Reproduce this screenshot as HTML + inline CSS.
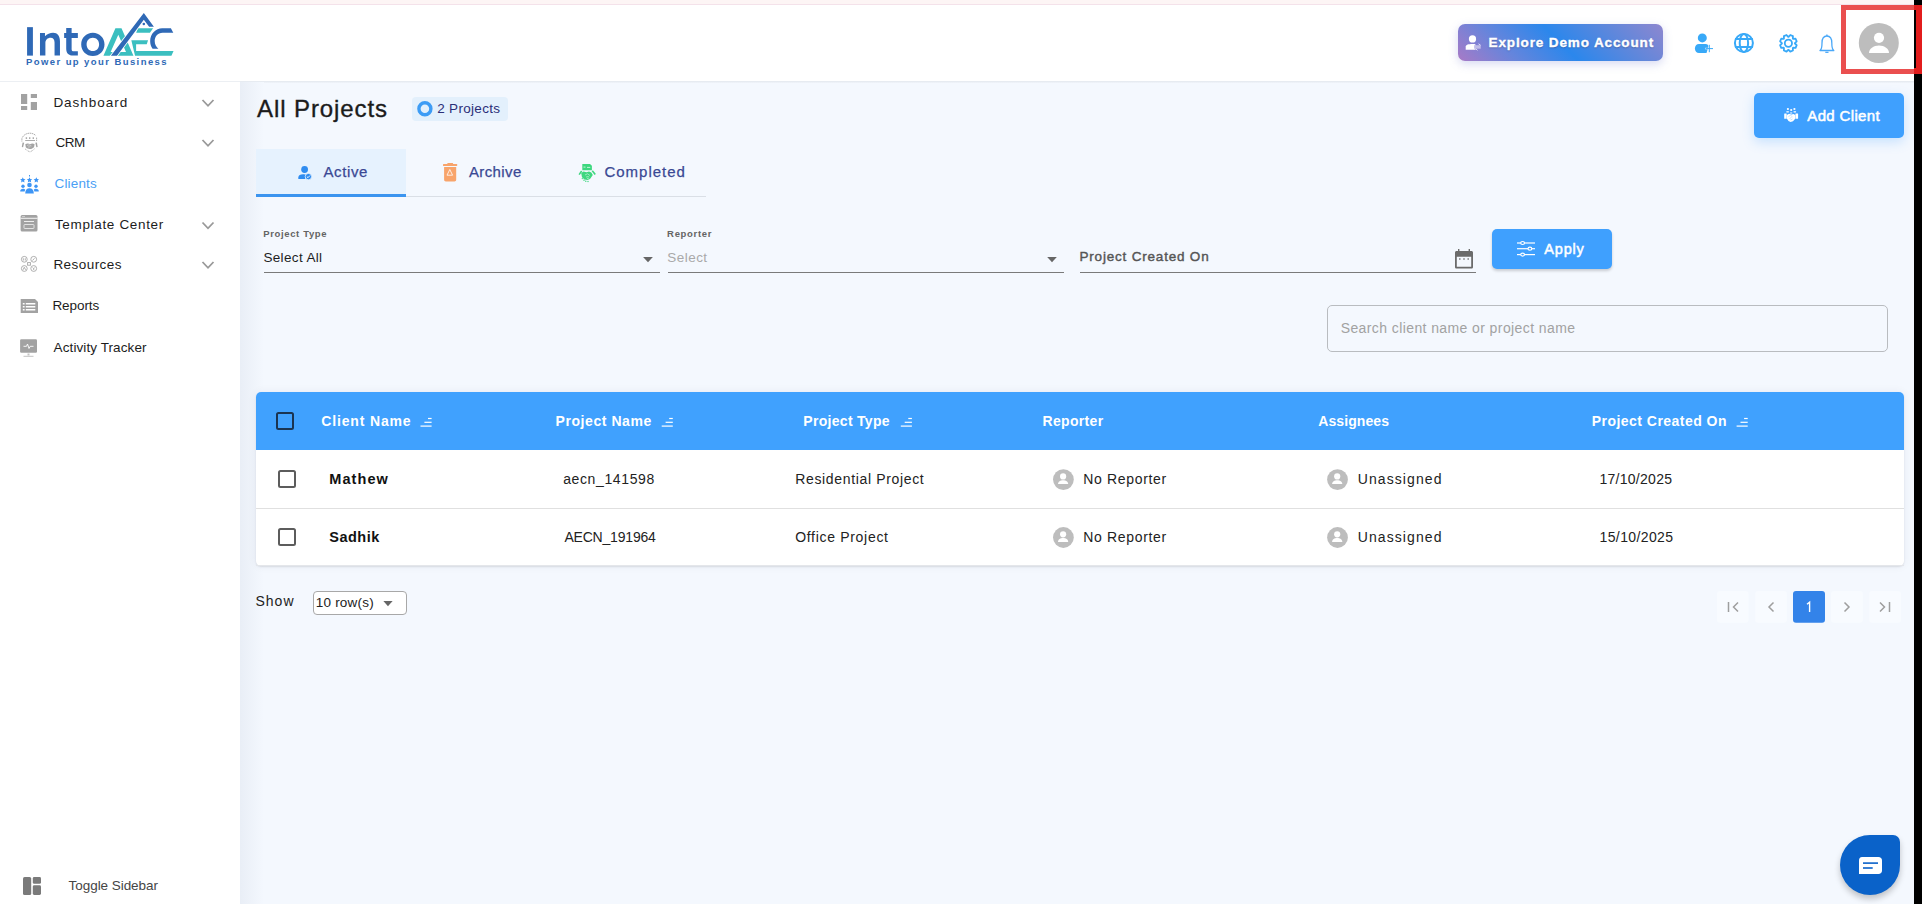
<!DOCTYPE html>
<html><head><meta charset="utf-8">
<style>
*{box-sizing:border-box;margin:0;padding:0}
html,body{width:1922px;height:904px;overflow:hidden;background:#f4f8fe;font-family:"Liberation Sans",sans-serif;color:#1e1e1e;position:relative}
.a{position:absolute}
.t{position:absolute;white-space:nowrap;line-height:normal}
svg{position:absolute;overflow:visible}
</style></head><body>
<!-- top strip -->
<div class="a" style="left:0;top:0;width:1914px;height:4px;background:#fdf5f5"></div>
<div class="a" style="left:0;top:4px;width:1914px;height:1px;background:#f4e2ea"></div>
<!-- header -->
<div class="a" style="left:0;top:5px;width:1914px;height:76px;background:#fff"></div>
<div class="a" style="left:0;top:81px;width:1914px;height:1px;background:#eceff3"></div>
<!-- sidebar -->
<div class="a" style="left:0;top:82px;width:240px;height:822px;background:#fff"></div>
<!-- content shade -->
<div class="a" style="left:240px;top:81px;width:1674px;height:2px;background:linear-gradient(180deg,#e3e8ee,#f1f5fb)"></div>
<div class="a" style="left:240px;top:82px;width:24px;height:822px;background:linear-gradient(90deg,#e9eef6,#f4f8fe)"></div>

<!-- LOGO -->
<svg style="left:20px;top:8px" width="160" height="64" viewBox="0 0 1600 640">
 <g transform="scale(0.8326)" fill="#2f69b6">
  <rect x="85" y="230" width="70" height="342"/>
  <path d="M240,572 V300 H300 V340 C325,312 360,298 398,298 C450,298 480,335 480,400 V572 H415 V415 C415,378 398,358 368,358 C330,358 305,385 305,420 V572 Z"/>
  <path d="M555,240 H620 V300 H695 V360 H620 V495 C620,515 630,520 650,520 H695 V572 H640 C585,572 555,545 555,490 V360 H530 V300 H555 Z"/>
  <path fill-rule="evenodd" d="M875,298 C955,298 1015,360 1015,437 C1015,515 955,576 875,576 C795,576 735,515 735,437 C735,360 795,298 875,298 Z M875,358 C830,358 800,392 800,437 C800,482 830,516 875,516 C920,516 950,482 950,437 C950,392 920,358 875,358 Z"/>
 </g>
 <g transform="translate(800,20) scale(0.531)">
  <path fill="#3bbfc0" fill-rule="evenodd" d="M65,860 L290,345 L405,345 L630,860 Z M345,465 L200,790 L490,790 Z"/>
  <path fill="#3bbfc0" d="M715,345 L1000,345 L940,430 L680,430 Z"/>
  <path fill="#3bbfc0" d="M590,570 L905,570 L880,645 L680,645 L680,770 L1385,770 L1345,860 L660,860 Z"/>
  <path fill="#2f69b6" d="M1335,345 L1380,430 L1180,430 C1085,430 1030,505 1030,585 C1030,650 1060,700 1100,730 L990,730 C960,690 945,640 945,585 C945,450 1050,345 1170,345 Z"/>
  <path fill="none" stroke="#fff" stroke-width="30" stroke-linejoin="miter" d="M205,860 L825,55 L1015,315 L925,315 L825,185 L320,860 Z"/>
  <path fill="#2f69b6" d="M205,860 L825,55 L1015,315 L925,315 L825,185 L320,860 Z"/>
  <circle cx="825" cy="265" r="24" fill="#2f69b6"/>
 </g>
</svg>

<!-- SIDEBAR ICONS -->
<svg style="left:0;top:0" width="240" height="904">
 <g fill="#a2a2a2">
  <rect x="21" y="94" width="6.2" height="10"/><rect x="30.8" y="94" width="6.2" height="4"/>
  <rect x="21" y="106" width="6.2" height="4"/><rect x="30.8" y="102" width="6.2" height="8"/>
 </g>
 <g fill="none" stroke="#999" stroke-width="1.8">
  <polyline points="202.5,100 208,105.8 213.5,100"/>
  <polyline points="202.5,140 208,145.8 213.5,140"/>
  <polyline points="202.5,222.5 208,228.3 213.5,222.5"/>
  <polyline points="202.5,262 208,267.8 213.5,262"/>
 </g>
 <!-- CRM -->
 <g fill="none" stroke="#a4a4a4" stroke-width="0.9" stroke-dasharray="1.6 0.6">
  <path d="M22.3,137.5 C24,134.5 27,133.2 29.7,133.2 C32.5,133.2 34.5,134.2 35.8,135.6"/>
  <path d="M21.9,138.3 V141.5 M36.6,137.6 V141"/>
 </g>
 <g fill="#a4a4a4">
  <rect x="25.7" y="137.3" width="1.4" height="1.6"/><rect x="29" y="137.3" width="1.4" height="1.6"/><rect x="32.6" y="137.3" width="1.4" height="1.6"/>
  <rect x="25.2" y="140.1" width="9.8" height="0.9"/>
  <path d="M22.6,142.6 L24.2,142.8 L23.1,147.3 L21.8,147 Z"/>
  <path d="M36.9,142.6 L35.3,142.8 L36.4,147.3 L37.7,147 Z"/>
  <path d="M25.3,144.3 C27,143.2 29,143.6 30,144.2 C31.5,143.4 33.3,143.4 34.6,144.3 L34,147.2 C32.5,148.6 31,149 29.8,149 C28.5,149 26.8,148.5 25.8,147.3 Z"/>
 </g>
 <path d="M25.2,149 L27.5,150.7 L30,152 L32.5,150.5 L34.5,148.8" fill="none" stroke="#a4a4a4" stroke-width="0.9" stroke-dasharray="1 0.7"/>
 <path d="M27,145.5 L29,144.8 L31.5,146 M28,147 L30.5,146.8" fill="none" stroke="#e2e2e2" stroke-width="0.6"/>
 <!-- Clients -->
 <g fill="#3d95f5">
  <path d="M22.8,177.2 l0.8,1.8 1.9,0.2 -1.4,1.3 0.4,1.9 -1.7,-1 -1.7,1 0.4,-1.9 -1.4,-1.3 1.9,-0.2 Z"/>
  <path d="M29.5,177.2 l0.8,1.8 1.9,0.2 -1.4,1.3 0.4,1.9 -1.7,-1 -1.7,1 0.4,-1.9 -1.4,-1.3 1.9,-0.2 Z"/>
  <path d="M36.3,177.2 l0.8,1.8 1.9,0.2 -1.4,1.3 0.4,1.9 -1.7,-1 -1.7,1 0.4,-1.9 -1.4,-1.3 1.9,-0.2 Z"/>
  <circle cx="23" cy="186.2" r="1.7"/><circle cx="36" cy="186.2" r="1.7"/><circle cx="29.5" cy="185" r="2.3"/>
  <path d="M25.2,193.4 C25.2,190 27,188.2 29.5,188.2 C32,188.2 33.8,190 33.8,193.4 Z"/>
  <path d="M20.2,191.6 C20.2,189.8 21.3,188.8 23,188.8 C24,188.8 24.8,189.2 25.2,189.8 L24.6,191.6 Z"/>
  <path d="M38.8,191.6 C38.8,189.8 37.7,188.8 36,188.8 C35,188.8 34.2,189.2 33.8,189.8 L34.4,191.6 Z"/>
  <rect x="29" y="175" width="1" height="1.5"/>
 </g>
 <!-- Template -->
 <g>
  <rect x="20.6" y="215" width="16.9" height="16.6" rx="1.5" fill="#a2a2a2"/>
  <rect x="20.6" y="217.8" width="16.9" height="0.9" fill="#fff"/>
  <rect x="22" y="216" width="3" height="0.7" fill="#ddd"/>
  <rect x="24" y="221" width="10" height="1" fill="#eee"/>
  <rect x="24" y="224.5" width="10" height="4" rx="0.6" fill="none" stroke="#e9e9e9" stroke-width="0.9"/>
 </g>
 <!-- Resources -->
 <g fill="none" stroke="#a6a6a6" stroke-width="0.9">
  <circle cx="24.3" cy="259.3" r="2.9"/><circle cx="33.7" cy="259.3" r="2.9"/>
  <circle cx="24.3" cy="268.5" r="2.9"/><circle cx="33.7" cy="268.5" r="2.9"/>
  <rect x="27.6" y="262.6" width="2.8" height="2.6"/>
  <path d="M23.3,260.5 V258.3 M25.3,260.5 V258.3 M32.5,260.5 L34.5,258.3 M23,269.8 L24.3,267.3 L25.6,269.8 M32.7,267.5 L33.7,268.7 L34.7,267.5 M33.7,268.7 V270"/>
 </g>
 <!-- Reports -->
 <g>
  <path d="M20.7,299 H35 L38,302 V313 H20.7 Z" fill="#a2a2a2"/>
  <g fill="#fff"><rect x="22.8" y="303" width="1.8" height="1.5"/><rect x="25.8" y="303" width="9.5" height="1.5"/>
  <rect x="22.8" y="306" width="1.8" height="1.5"/><rect x="25.8" y="306" width="9.5" height="1.5"/>
  <rect x="22.8" y="309" width="1.8" height="1.5"/><rect x="25.8" y="309" width="9.5" height="1.5"/></g>
 </g>
 <!-- Activity -->
 <g>
  <rect x="20.1" y="339.2" width="16.9" height="13.6" rx="1.2" fill="#a2a2a2"/>
  <polyline points="23.5,346.3 26.5,346.3 27.5,344 29,348.5 30.2,346.3 33.5,346.3" fill="none" stroke="#fff" stroke-width="0.9"/>
  <rect x="27.5" y="353.5" width="2" height="2" fill="#c4c4c4"/>
  <rect x="23.5" y="355.8" width="10" height="1" fill="#c4c4c4"/>
 </g>
 <!-- Toggle -->
 <g fill="#7a7a7a">
  <rect x="23" y="877" width="8.2" height="18" rx="1.6"/>
  <rect x="32.8" y="877" width="8.2" height="6.8" rx="1.4"/>
  <rect x="32.8" y="885.3" width="8.2" height="9.7" rx="1.4"/>
 </g>
</svg>

<!-- HEADER RIGHT -->
<div class="a" style="left:1458px;top:24px;width:205px;height:37px;border-radius:7px;background:linear-gradient(45deg,#a87ac6 0%,#6585dc 25%,#2b87ec 50%,#5d87dc 75%,#8e87cf 100%);box-shadow:0 3px 10px rgba(110,120,210,0.28)"></div>
<svg style="left:1464px;top:34px" width="20" height="18" viewBox="0 0 20 18">
 <g fill="#fff"><circle cx="8.5" cy="4.9" r="3.6"/><path d="M1.7,15.8 V12.6 C1.7,10.9 4.5,10.1 8.5,10.1 C10,10.1 11,10.2 11.5,10.4 V15.8 Z"/></g>
 <rect x="10.1" y="11.2" width="6.6" height="3.5" fill="#c0bdea"/>
 <path d="M14.5,9.8 L16.6,11.2 M13.5,16.3 L11.6,14.8" stroke="#e8e6f8" stroke-width="0.9"/>
</svg>
<svg style="left:0;top:0" width="1922" height="100">
 <!-- add user -->
 <g fill="#38a9f8">
  <circle cx="1702.3" cy="37.9" r="4.5"/>
  <path d="M1699,44 H1705.5 C1707.5,44 1708.5,45 1708.5,46.5 L1706.5,53 H1699 C1696.5,53 1694.9,51 1694.9,48.5 C1694.9,46 1696.5,44 1699,44 Z"/>
  <rect x="1705.2" y="47.8" width="8" height="1.5" fill="#fff"/><rect x="1708.5" y="44.3" width="1.5" height="8" fill="#fff"/>
  <rect x="1705.6" y="48.1" width="7.4" height="1"/><rect x="1708.8" y="44.8" width="1" height="7.4"/>
 </g>
 <!-- globe -->
 <g fill="none" stroke="#38a9f8" stroke-width="2">
  <circle cx="1743.9" cy="43" r="9"/>
  <ellipse cx="1743.9" cy="43" rx="4.2" ry="9"/>
  <line x1="1735" y1="39" x2="1752.8" y2="39"/><line x1="1735" y1="47" x2="1752.8" y2="47"/>
 </g>
 <!-- gear -->
 <g fill="none" stroke="#38a9f8" stroke-width="1.8" stroke-linejoin="round">
  <path d="M1794.90,43.51 L1796.69,45.18 L1795.59,47.83 L1793.14,47.74 L1792.84,48.04 L1792.93,50.49 L1790.28,51.59 L1788.61,49.80 L1788.19,49.80 L1786.52,51.59 L1783.87,50.49 L1783.96,48.04 L1783.66,47.74 L1781.21,47.83 L1780.11,45.18 L1781.90,43.51 L1781.90,43.09 L1780.11,41.42 L1781.21,38.77 L1783.66,38.86 L1783.96,38.56 L1783.87,36.11 L1786.52,35.01 L1788.19,36.80 L1788.61,36.80 L1790.28,35.01 L1792.93,36.11 L1792.84,38.56 L1793.14,38.86 L1795.59,38.77 L1796.69,41.42 L1794.90,43.09 Z"/>
  <circle cx="1788.4" cy="43.3" r="3.6"/>
 </g>
 <!-- bell -->
 <g fill="none" stroke="#4aa8f8" stroke-width="1.3" stroke-linejoin="round">
  <path d="M1820,50.5 C1822,49 1822,46 1822,43 C1822,38 1824,36 1826.9,36 C1829.8,36 1831.8,38 1831.8,43 C1831.8,46 1831.8,49 1833.8,50.5 Z"/>
  <path d="M1826.9,34.5 V36"/>
  <path d="M1825.3,52.3 H1828.5"/>
 </g>
 <!-- avatar -->
 <circle cx="1878.8" cy="42.9" r="20" fill="#bdbdbd"/>
 <circle cx="1879" cy="37.8" r="5.1" fill="#fff"/>
 <path d="M1869,53.1 C1869,48.5 1873.5,45.4 1879,45.4 C1884.5,45.4 1889,48.5 1889,53.1 Z" fill="#fff"/>
</svg>

<!-- CONTENT -->
<!-- badge -->
<div class="a" style="left:412px;top:97px;width:96px;height:24px;border-radius:4px;background:#e3f0fc"></div>
<svg style="left:0;top:0" width="520" height="130"><circle cx="424.9" cy="108.8" r="6" fill="none" stroke="#3d9cf5" stroke-width="3.4"/></svg>
<!-- add client -->
<div class="a" style="left:1754px;top:93px;width:150px;height:45px;border-radius:5px;background:#3fa0fe;box-shadow:0 4px 12px rgba(63,160,254,0.25)"></div>
<!-- tabs -->
<div class="a" style="left:256px;top:149px;width:150px;height:48px;background:#e6f2fe"></div>
<div class="a" style="left:406px;top:195.5px;width:300px;height:1.5px;background:#dadfe6"></div>
<div class="a" style="left:256px;top:194px;width:150px;height:3px;background:#3b94ef"></div>
<svg style="left:0;top:0" width="720" height="200">
 <g fill="#2f8cf0">
  <circle cx="304.6" cy="169.5" r="3.4"/>
  <path d="M298.3,178.9 V177.5 C298.3,175.3 300.5,174.3 303,174.3 C304.5,174.3 305.5,174.5 306,174.8 L305.3,178.9 Z"/>
  <circle cx="308.4" cy="176.6" r="3.2" stroke="#e6f2fe" stroke-width="0.8"/>
  <polyline points="306.9,176.6 308,177.7 309.9,175.6" fill="none" stroke="#fff" stroke-width="0.9"/>
 </g>
 <g fill="#f8a46b">
  <rect x="447.3" y="162.9" width="5.8" height="1.6" rx="0.5"/>
  <rect x="443" y="164.1" width="14.2" height="2" rx="0.5"/>
  <path d="M444.1,167 H456.2 V179.8 C456.2,180.8 455.4,181.4 454.5,181.4 H445.8 C444.9,181.4 444.1,180.8 444.1,179.8 Z"/>
  <polygon points="449.8,169.5 447,175.2 452.6,175.2" fill="none" stroke="#fff" stroke-width="0.8"/>
 </g>
 <g fill="#3dd77f">
  <path d="M582.3,164 H590 L591.9,165.8 V170.3 H582.3 Z"/>
  <rect x="583.5" y="166.6" width="2" height="1" fill="#c6f2d9"/><rect x="587" y="166.9" width="3.2" height="1" fill="#c6f2d9"/>
  <path d="M578.5,174.3 L581,170.6 L582.3,171.4 L579.8,175.1 Z"/>
  <path d="M595.9,174.1 L592.9,170.3 L591.7,171.2 L594.6,174.9 Z"/>
  <path d="M581.2,173 L583.5,171.5 L586.5,172.3 L589,171.6 L591.3,172.4 L592.8,175 L590,179 L587.5,180 L584.5,179.6 L582,177.3 Z"/>
  <circle cx="582.3" cy="178.6" r="0.7"/><circle cx="584" cy="180.2" r="0.7"/><circle cx="585.8" cy="181.3" r="0.7"/><circle cx="588" cy="181.5" r="0.7"/>
 </g>
 <path d="M585,175 L587.5,173.8 L590,175.5 M586,177 L588.8,176.5 M587,178.6 L589.3,178" fill="none" stroke="#d5f5e3" stroke-width="0.6"/>
</svg>
<!-- FILTERS -->
<div class="a" style="left:264px;top:272px;width:396px;height:1.2px;background:#7a7a7a"></div>
<div class="a" style="left:668px;top:272px;width:396px;height:1.2px;background:#7a7a7a"></div>
<div class="a" style="left:1080px;top:272px;width:396px;height:1.2px;background:#7a7a7a"></div>
<svg style="left:0;top:0" width="1500" height="280">
 <polygon points="643.1,257 652.9,257 648,262.2" fill="#666"/>
 <polygon points="1047.2,257 1056.8,257 1052,262.2" fill="#666"/>
 <g fill="#6b6b6b">
  <rect x="1458" y="249" width="1.4" height="3"/><rect x="1468.6" y="249" width="1.4" height="3"/>
  <path fill-rule="evenodd" d="M1456.5,251 H1471.5 C1472.3,251 1473,251.7 1473,252.5 V267 C1473,267.9 1472.3,268.6 1471.5,268.6 H1456.5 C1455.7,268.6 1455,267.9 1455,267 V252.5 C1455,251.7 1455.7,251 1456.5,251 Z M1456.8,256.8 V266.8 H1471.2 V256.8 Z"/>
  <rect x="1459.1" y="258.3" width="1.4" height="1.4"/><rect x="1463.3" y="258.3" width="1.4" height="1.4"/><rect x="1467.5" y="258.3" width="1.4" height="1.4"/>
 </g>
</svg>
<!-- apply -->
<div class="a" style="left:1492px;top:229px;width:120px;height:40px;border-radius:5px;background:#3fa0fe;box-shadow:0 2px 3px rgba(0,0,0,0.18)"></div>
<svg style="left:0;top:0" width="1700" height="280">
 <g stroke="#fff" stroke-width="1.2" fill="#3fa0fe">
  <line x1="1517" y1="243" x2="1535" y2="243"/><line x1="1517" y1="248.7" x2="1535" y2="248.7"/><line x1="1517" y1="254.6" x2="1535" y2="254.6"/>
  <ellipse cx="1522.6" cy="243" rx="1.9" ry="1.5"/><ellipse cx="1529.9" cy="248.7" rx="1.9" ry="1.5"/><ellipse cx="1522.6" cy="254.6" rx="1.9" ry="1.5"/>
 </g>
</svg>
<!-- search -->
<div class="a" style="left:1327px;top:305px;width:561px;height:47px;border:1px solid #b9bcc0;border-radius:5px"></div>

<!-- add client icon -->
<svg style="left:0;top:0" width="1922" height="200">
 <g fill="#fff">
  <circle cx="1787.9" cy="109" r="1.1"/><circle cx="1791.2" cy="110" r="1.1"/><circle cx="1794.4" cy="109" r="1.1"/>
  <rect x="1786.3" y="111.2" width="2.6" height="1.2" rx="0.4"/><rect x="1790" y="112.4" width="2.4" height="1.1" rx="0.4"/><rect x="1793.5" y="111.2" width="2.6" height="1.2" rx="0.4"/>
  <rect x="1784.2" y="113.6" width="2.5" height="5.1" rx="0.3"/><rect x="1795.4" y="113.6" width="2.7" height="5.1" rx="0.3"/>
  <path d="M1786.8,115 L1789,113.8 L1791.5,114.5 L1793.5,114 L1795.2,115 L1795.2,118.8 L1793,121.2 L1790.5,122.1 L1788.5,121 L1786.8,118.5 Z"/>
 </g>
 <path d="M1788.5,116.5 L1790.5,115.3 L1792.5,116.8 M1789.5,118.5 L1791.5,117.5 M1790.5,120 L1792.5,119" stroke="#9fd0ff" stroke-width="0.6" fill="none"/>
</svg>

<!-- TABLE -->
<div class="a" style="left:256px;top:392px;width:1648px;height:174px;background:#fff;border-radius:5px;box-shadow:0 1px 2px rgba(0,0,0,0.10),0 0 10px rgba(20,40,80,0.06)"></div>
<div class="a" style="left:256px;top:392px;width:1648px;height:58px;background:#40a1fe;border-radius:5px 5px 0 0"></div>
<div class="a" style="left:256px;top:508px;width:1648px;height:1px;background:#e0e0e0"></div>
<div class="a" style="left:256px;top:565px;width:1648px;height:1px;background:#e4e6ea"></div>
<div class="a" style="left:276.2px;top:412.3px;width:17.5px;height:17.5px;border:2px solid #1a3452;border-radius:2.5px"></div>
<div class="a" style="left:278.2px;top:470.3px;width:17.5px;height:17.3px;border:2px solid #5c5c5c;border-radius:2.5px"></div>
<div class="a" style="left:278.2px;top:528.3px;width:17.5px;height:17.3px;border:2px solid #5c5c5c;border-radius:2.5px"></div>
<svg style="left:0;top:0" width="1922" height="560">
 <g fill="#fff" id="sorts">
  <rect x="428.0" y="417.9" width="3.6" height="1.2"/><rect x="424.4" y="421.7" width="7.2" height="1.2"/><rect x="420.5" y="425.5" width="11.1" height="1.2"/>
  <rect x="669.2" y="417.9" width="3.6" height="1.2"/><rect x="665.6" y="421.7" width="7.2" height="1.2"/><rect x="661.7" y="425.5" width="11.1" height="1.2"/>
  <rect x="908.3" y="417.9" width="3.6" height="1.2"/><rect x="904.7" y="421.7" width="7.2" height="1.2"/><rect x="900.8" y="425.5" width="11.1" height="1.2"/>
  <rect x="1744.1" y="417.9" width="3.6" height="1.2"/><rect x="1740.5" y="421.7" width="7.2" height="1.2"/><rect x="1736.6" y="425.5" width="11.1" height="1.2"/>
 </g>
 <g id="avs">
  <g transform="translate(1063.4,479.6)"><circle r="10.4" fill="#bdbdbd"/><circle cx="-0.3" cy="-3.2" r="3.1" fill="#fff"/><path d="M-5.4,4.5 C-5.4,2 -3,0.6 -0.3,0.6 C2.4,0.6 4.8,2 4.8,4.5 Z" fill="#fff"/></g>
  <g transform="translate(1063.4,537.5)"><circle r="10.4" fill="#bdbdbd"/><circle cx="-0.3" cy="-3.2" r="3.1" fill="#fff"/><path d="M-5.4,4.5 C-5.4,2 -3,0.6 -0.3,0.6 C2.4,0.6 4.8,2 4.8,4.5 Z" fill="#fff"/></g>
  <g transform="translate(1337.5,479.6)"><circle r="10.4" fill="#bdbdbd"/><circle cx="-0.3" cy="-3.2" r="3.1" fill="#fff"/><path d="M-5.4,4.5 C-5.4,2 -3,0.6 -0.3,0.6 C2.4,0.6 4.8,2 4.8,4.5 Z" fill="#fff"/></g>
  <g transform="translate(1337.5,537.5)"><circle r="10.4" fill="#bdbdbd"/><circle cx="-0.3" cy="-3.2" r="3.1" fill="#fff"/><path d="M-5.4,4.5 C-5.4,2 -3,0.6 -0.3,0.6 C2.4,0.6 4.8,2 4.8,4.5 Z" fill="#fff"/></g>
 </g>
</svg>

<!-- SHOW / PAGINATION -->
<div class="a" style="left:313px;top:591px;width:94px;height:24px;border:1px solid #a8a8a8;border-radius:4px;background:#fff"></div>
<svg style="left:0;top:0" width="1922" height="640">
 <polygon points="383.4,601 392.6,601 388,606.2" fill="#666"/>
 <g fill="#f8fbff">
  <rect x="1717" y="591" width="31.5" height="31.7" rx="3"/>
  <rect x="1755.2" y="591" width="31.7" height="31.7" rx="3"/>
  <rect x="1831" y="591" width="31.9" height="31.7" rx="3"/>
  <rect x="1869.2" y="591" width="31.8" height="31.7" rx="3"/>
 </g>
 <rect x="1793" y="591" width="32" height="31.7" rx="3" fill="#3383e9"/>
 <g fill="none" stroke="#9e9e9e" stroke-width="1.5">
  <line x1="1728.5" y1="602" x2="1728.5" y2="612"/>
  <polyline points="1738,602.5 1733.5,607 1738,611.5"/>
  <polyline points="1773.5,602.5 1769,607 1773.5,611.5"/>
  <polyline points="1844.5,602.5 1849,607 1844.5,611.5"/>
  <polyline points="1880,602.5 1884.5,607 1880,611.5"/>
  <line x1="1889.5" y1="602" x2="1889.5" y2="612"/>
 </g>
 <path d="M1807,604.2 L1809.6,602.2 V612" fill="none" stroke="#fff" stroke-width="1.4"/>
</svg>

<!-- CHAT -->
<div class="a" style="left:1840px;top:835px;width:60px;height:60px;background:#0a62c9;border-radius:30px 7px 30px 30px;box-shadow:0 4px 6px rgba(0,0,0,0.22)"></div>
<svg style="left:0;top:0" width="1922" height="904">
 <path d="M1862,857 H1878.5 C1880.5,857 1882,858.5 1882,860.5 V870.5 C1882,872.5 1880.5,874 1878.5,874 H1859 V860.5 C1859,858.5 1860,857 1862,857 Z" fill="#fff"/>
 <rect x="1863" y="862.3" width="15" height="1.6" fill="#0a62c9"/>
 <rect x="1863" y="867.2" width="9.7" height="1.6" fill="#0a62c9"/>
</svg>

<!-- TEXTS -->
<div class="t" style="left:53.40px;top:95.00px;font-size:13.5px;font-weight:400;color:#1c1c1c;letter-spacing:0.975px;">Dashboard</div>
<div class="t" style="left:55.40px;top:135.20px;font-size:13.5px;font-weight:400;color:#1c1c1c;letter-spacing:-0.400px;">CRM</div>
<div class="t" style="left:54.60px;top:176.20px;font-size:13.5px;font-weight:400;color:#4aa0f5;letter-spacing:0.133px;">Clients</div>
<div class="t" style="left:54.90px;top:216.90px;font-size:13.5px;font-weight:400;color:#1c1c1c;letter-spacing:0.664px;">Template Center</div>
<div class="t" style="left:53.40px;top:257.10px;font-size:13.5px;font-weight:400;color:#1c1c1c;letter-spacing:0.450px;">Resources</div>
<div class="t" style="left:52.40px;top:298.00px;font-size:13.5px;font-weight:400;color:#1c1c1c;letter-spacing:-0.067px;">Reports</div>
<div class="t" style="left:53.60px;top:340.00px;font-size:13.5px;font-weight:400;color:#1c1c1c;letter-spacing:0.093px;">Activity Tracker</div>
<div class="t" style="left:68.60px;top:878.30px;font-size:13.5px;font-weight:400;color:#454545;letter-spacing:-0.054px;">Toggle Sidebar</div>
<div class="t" style="left:26.00px;top:56.00px;font-size:9.5px;font-weight:700;color:#2f69b6;letter-spacing:1.414px;">Power up your Business</div>
<div class="t" style="left:1488.50px;top:34.80px;font-size:13.5px;font-weight:700;color:#ffffff;letter-spacing:0.879px;-webkit-text-stroke:0.35px #fff;text-shadow:0 1px 1.5px rgba(40,40,90,0.45);">Explore Demo Account</div>
<div class="t" style="left:257.00px;top:95.20px;font-size:24px;font-weight:400;color:#1b1b1b;letter-spacing:0.909px;-webkit-text-stroke:0.35px #1b1b1b;">All Projects</div>
<div class="t" style="left:437.20px;top:101.30px;font-size:13.5px;font-weight:400;color:#2a2f78;letter-spacing:0.311px;">2 Projects</div>
<div class="t" style="left:1807.30px;top:106.50px;font-size:15px;font-weight:400;color:#ffffff;letter-spacing:0.344px;-webkit-text-stroke:0.5px #fff;">Add Client</div>
<div class="t" style="left:323.50px;top:163.30px;font-size:15px;font-weight:400;color:#3a4894;letter-spacing:0.620px;-webkit-text-stroke:0.25px #3a4894;">Active</div>
<div class="t" style="left:469.00px;top:163.30px;font-size:15px;font-weight:400;color:#3a4894;letter-spacing:0.367px;-webkit-text-stroke:0.25px #3a4894;">Archive</div>
<div class="t" style="left:604.40px;top:163.30px;font-size:15px;font-weight:400;color:#3a4894;letter-spacing:1.000px;-webkit-text-stroke:0.25px #3a4894;">Completed</div>
<div class="t" style="left:263.20px;top:228.10px;font-size:9.5px;font-weight:700;color:#646464;letter-spacing:0.645px;">Project Type</div>
<div class="t" style="left:263.40px;top:249.90px;font-size:13.5px;font-weight:400;color:#1e1e1e;letter-spacing:0.356px;">Select All</div>
<div class="t" style="left:667.10px;top:228.10px;font-size:9.5px;font-weight:700;color:#646464;letter-spacing:0.671px;">Reporter</div>
<div class="t" style="left:667.30px;top:250.00px;font-size:13.5px;font-weight:400;color:#a9a9a9;letter-spacing:0.460px;">Select</div>
<div class="t" style="left:1079.50px;top:248.90px;font-size:13.5px;font-weight:400;color:#555555;letter-spacing:0.800px;-webkit-text-stroke:0.4px #555;">Project Created On</div>
<div class="t" style="left:1544.30px;top:240.70px;font-size:14.5px;font-weight:400;color:#ffffff;letter-spacing:0.800px;-webkit-text-stroke:0.5px #fff;">Apply</div>
<div class="t" style="left:1340.70px;top:319.50px;font-size:14px;font-weight:400;color:#a2a2a2;letter-spacing:0.403px;">Search client name or project name</div>
<div class="t" style="left:321.30px;top:413.10px;font-size:14px;font-weight:700;color:#ffffff;letter-spacing:0.840px;">Client Name</div>
<div class="t" style="left:555.60px;top:413.10px;font-size:14px;font-weight:700;color:#ffffff;letter-spacing:0.555px;">Project Name</div>
<div class="t" style="left:803.30px;top:413.10px;font-size:14px;font-weight:700;color:#ffffff;letter-spacing:0.300px;">Project Type</div>
<div class="t" style="left:1042.50px;top:413.10px;font-size:14px;font-weight:700;color:#ffffff;letter-spacing:0.329px;">Reporter</div>
<div class="t" style="left:1318.20px;top:413.10px;font-size:14px;font-weight:700;color:#ffffff;letter-spacing:0.100px;">Assignees</div>
<div class="t" style="left:1591.70px;top:413.10px;font-size:14px;font-weight:700;color:#ffffff;letter-spacing:0.471px;">Project Created On</div>
<div class="t" style="left:329.30px;top:470.90px;font-size:14.5px;font-weight:700;color:#111111;letter-spacing:1.080px;">Mathew</div>
<div class="t" style="left:329.30px;top:528.90px;font-size:14.5px;font-weight:700;color:#111111;letter-spacing:0.480px;">Sadhik</div>
<div class="t" style="left:563.20px;top:471.40px;font-size:14px;font-weight:400;color:#222222;letter-spacing:0.620px;">aecn_141598</div>
<div class="t" style="left:564.40px;top:529.20px;font-size:14px;font-weight:400;color:#222222;letter-spacing:-0.190px;">AECN_191964</div>
<div class="t" style="left:795.20px;top:471.40px;font-size:14px;font-weight:400;color:#222222;letter-spacing:0.656px;">Residential Project</div>
<div class="t" style="left:795.20px;top:529.20px;font-size:14px;font-weight:400;color:#222222;letter-spacing:0.692px;">Office Project</div>
<div class="t" style="left:1083.20px;top:471.10px;font-size:14px;font-weight:400;color:#222222;letter-spacing:0.670px;">No Reporter</div>
<div class="t" style="left:1083.20px;top:529.00px;font-size:14px;font-weight:400;color:#222222;letter-spacing:0.670px;">No Reporter</div>
<div class="t" style="left:1357.70px;top:471.10px;font-size:14px;font-weight:400;color:#222222;letter-spacing:1.089px;">Unassigned</div>
<div class="t" style="left:1357.70px;top:529.00px;font-size:14px;font-weight:400;color:#222222;letter-spacing:1.089px;">Unassigned</div>
<div class="t" style="left:1599.50px;top:471.30px;font-size:14px;font-weight:400;color:#222222;letter-spacing:0.267px;">17/10/2025</div>
<div class="t" style="left:1599.50px;top:529.20px;font-size:14px;font-weight:400;color:#222222;letter-spacing:0.389px;">15/10/2025</div>
<div class="t" style="left:255.40px;top:593.00px;font-size:14px;font-weight:400;color:#222222;letter-spacing:1.033px;">Show</div>
<div class="t" style="left:315.80px;top:594.70px;font-size:13.5px;font-weight:400;color:#222222;letter-spacing:0.200px;">10 row(s)</div>
<!-- ANNOTATION -->
<div class="a" style="left:1914px;top:0;width:8px;height:904px;background:#000"></div>
<div class="a" style="left:1841px;top:4.5px;width:90px;height:69px;border:5px solid #ea4f4f;border-right:none"></div>
<div class="a" style="left:1914px;top:4.5px;width:8px;height:5.5px;background:#e21c1c"></div>
<div class="a" style="left:1916px;top:10px;width:6px;height:63px;background:#e21c1c"></div>
<div class="a" style="left:1914px;top:68px;width:8px;height:5.5px;background:#e21c1c"></div>

</body></html>
